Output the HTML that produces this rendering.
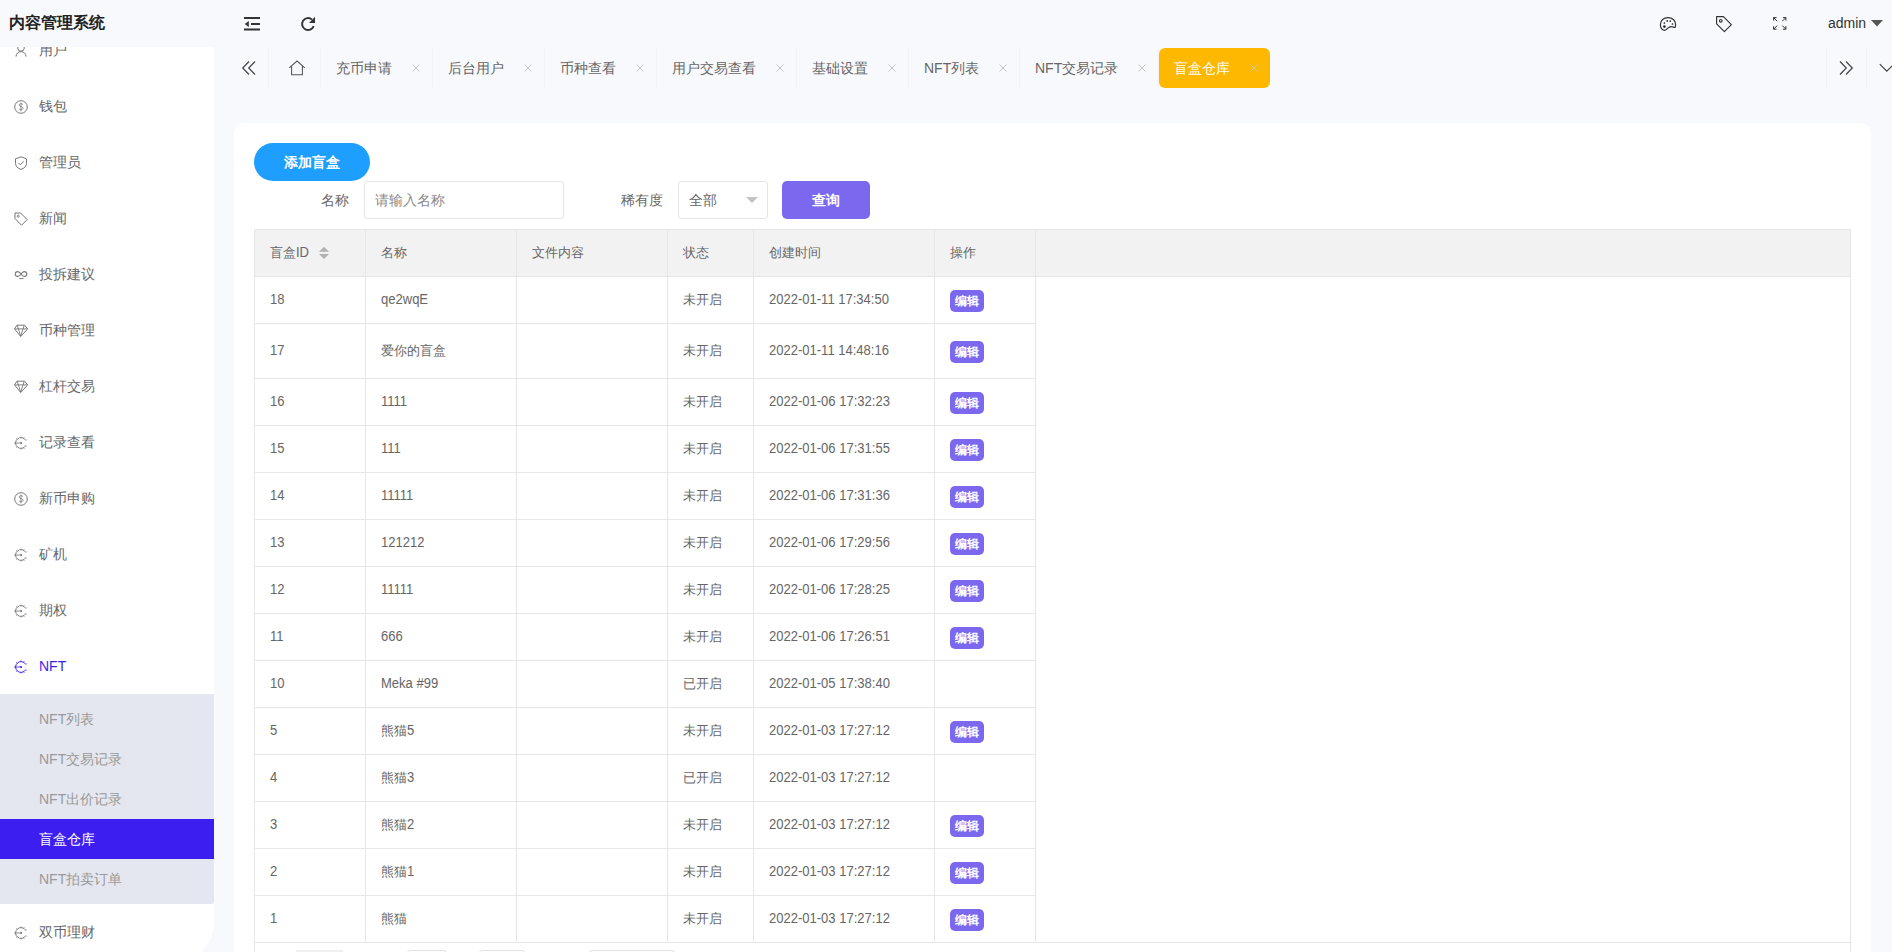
<!DOCTYPE html>
<html><head><meta charset="utf-8">
<style>
*{margin:0;padding:0;box-sizing:border-box}
html,body{width:1892px;height:952px;overflow:hidden}
body{font-family:"Liberation Sans",sans-serif;font-size:14px;color:#666;background:#f8f9fd;position:relative}
.a{position:absolute}
#logo{left:9px;top:11px;font-size:16px;font-weight:bold;color:#222;line-height:24px}
#side{left:0;top:47px;width:214px;height:913px;background:#fff;overflow:hidden;border-bottom-right-radius:36px}
.mi{position:absolute;left:0;width:214px;height:56px;color:#666;font-size:14px}
.mi .ic{position:absolute;left:14px;top:22px;width:14px;height:14px;line-height:0}
.mi .tx{position:absolute;left:39px;top:0;line-height:56px}
#sub{position:absolute;left:0;top:647px;width:214px;height:210px;background:#e4e7ef;border-bottom-right-radius:2px}
.si{position:absolute;left:0;width:214px;height:40px;line-height:40px;color:#999}
.si span{position:absolute;left:39px;top:0}
.si.on{background:#3c1ff0;color:#fff}
#card{left:234px;top:123px;width:1637px;height:900px;background:#fff;border-radius:10px}
.tt{position:absolute;top:48px;height:40px;line-height:40px;color:#666;white-space:nowrap}
.sep{position:absolute;top:48px;width:1px;height:40px;background:#f2f2f3}
.x{position:absolute;top:64px;width:8px;height:8px;line-height:0}
#tbl{left:254px;top:229px;border-collapse:collapse;table-layout:fixed}
#tbl td,#tbl th{border:1px solid #e6e6e6;padding:0 0 0 15px;text-align:left;font-weight:normal;font-size:13px;color:#666;white-space:nowrap;overflow:hidden}
#tbl th{background:#f2f2f2;height:47px}
#tbl td{height:47px}
.n{display:inline-block;font-size:14px;transform:scaleX(.93);transform-origin:0 50%;vertical-align:top;position:relative;top:-1px}
.ed{display:inline-block;background:#7b68ee;color:#fff;font-size:12px;font-weight:bold;border-radius:5px;width:34px;height:22px;line-height:22px;text-align:center;vertical-align:middle;margin-top:2px}
</style></head><body>
<div id="logo" class="a">内容管理系统</div>

<svg class="a" style="left:0;top:0" width="340" height="40" viewBox="0 0 340 40"><path d="M244 18h16M251 24h9M244 29.5h16" fill="none" stroke="#333" stroke-width="2"/><path d="M244.8 24l4-3v6z" fill="#333"/><path d="M313.7 26.2A6 6 0 1 1 311.9 19.4" fill="none" stroke="#333" stroke-width="1.9"/><path d="M315 16.8v6.2h-6z" fill="#333"/></svg>

<div id="side" class="a">
<div class="mi" style="top:-25px;color:#666"><div class="ic"><svg width="14" height="14" viewBox="0 0 14 14"><circle cx="7" cy="3.9" r="3.3" fill="none" stroke="#777" stroke-width="1"/><path d="M2 12.6C2 9.7 4.2 7.6 7 7.6s5 2.1 5 5" fill="none" stroke="#777" stroke-width="1"/></svg></div><div class="tx">用户</div></div>
<div class="mi" style="top:31px;color:#666"><div class="ic"><svg width="14" height="14" viewBox="0 0 14 14"><circle cx="7" cy="7" r="6.3" fill="none" stroke="#777" stroke-width="1"/><path d="M9 4.6c-.4-.6-1.1-.9-2-.9-1.1 0-1.9.6-1.9 1.4 0 1.9 4 1 4 3 0 .9-.9 1.5-2.1 1.5-.9 0-1.7-.4-2.1-1M7 2.6v8.8" fill="none" stroke="#777" stroke-width=".8"/></svg></div><div class="tx">钱包</div></div>
<div class="mi" style="top:87px;color:#666"><div class="ic"><svg width="14" height="14" viewBox="0 0 14 14"><path d="M7 .8L1.5 2.8v4.6c0 3 2.6 5.1 5.5 6 2.9-.9 5.5-3 5.5-6V2.8z" fill="none" stroke="#777" stroke-width="1"/><path d="M4.5 7l1.8 1.8L9.7 5.4" fill="none" stroke="#777" stroke-width="1"/></svg></div><div class="tx">管理员</div></div>
<div class="mi" style="top:143px;color:#666"><div class="ic"><svg width="14" height="14" viewBox="0 0 14 14"><path d="M1 1h5.6l6.6 6.6-5.6 5.6L1 6.6z" fill="none" stroke="#777" stroke-width="1" stroke-linejoin="round"/><circle cx="4.2" cy="4.2" r="1.1" fill="none" stroke="#777" stroke-width=".9"/></svg></div><div class="tx">新闻</div></div>
<div class="mi" style="top:199px;color:#666"><div class="ic"><svg width="14" height="14" viewBox="0 0 14 14"><path d="M7 6C6 4.6 5.1 3.6 3.9 3.6 2.4 3.6 1.2 4.6 1.2 6S2.4 8.4 3.9 8.4C5.1 8.4 6 7.4 7 6S8.9 3.6 10.1 3.6C11.6 3.6 12.8 4.6 12.8 6S11.6 8.4 10.1 8.4C8.9 8.4 8 7.4 7 6Z" fill="none" stroke="#777" stroke-width="1.1"/><path d="M5.2 10.6h4.3" stroke="#777" stroke-width="1"/></svg></div><div class="tx">投拆建议</div></div>
<div class="mi" style="top:255px;color:#666"><div class="ic"><svg width="14" height="14" viewBox="0 0 14 14"><path d="M2.9 1.2h7.8l2.9 3.7-6.9 7.6L.5 4.9z" fill="none" stroke="#777" stroke-width="1" stroke-linejoin="round"/><path d="M1 4.9h12M3.3 1.6l3.4 10.5 3.4-10.5" fill="none" stroke="#777" stroke-width=".9"/></svg></div><div class="tx">币种管理</div></div>
<div class="mi" style="top:311px;color:#666"><div class="ic"><svg width="14" height="14" viewBox="0 0 14 14"><path d="M2.9 1.2h7.8l2.9 3.7-6.9 7.6L.5 4.9z" fill="none" stroke="#777" stroke-width="1" stroke-linejoin="round"/><path d="M1 4.9h12M3.3 1.6l3.4 10.5 3.4-10.5" fill="none" stroke="#777" stroke-width=".9"/></svg></div><div class="tx">杠杆交易</div></div>
<div class="mi" style="top:367px;color:#666"><div class="ic"><svg width="14" height="14" viewBox="0 0 14 14"><path d="M11.68 4.30A5.4 5.4 0 1 0 11.68 9.70" fill="none" stroke="#777" stroke-width=".95"/><path d="M11.68 4.30L12.63 3.75M9.70 2.32L10.25 1.37M7.00 1.60L7.00 0.50M3.18 3.18L2.40 2.40M1.60 7.00L0.50 7.00M3.18 10.82L2.40 11.60M7.00 12.40L7.00 13.50M9.70 11.68L10.25 12.63M11.68 9.70L12.63 10.25" fill="none" stroke="#777" stroke-width=".8"/><path d="M.4 7H7" stroke="#777" stroke-width=".8"/><circle cx="7.1" cy="7" r="1.05" fill="#777"/></svg></div><div class="tx">记录查看</div></div>
<div class="mi" style="top:423px;color:#666"><div class="ic"><svg width="14" height="14" viewBox="0 0 14 14"><circle cx="7" cy="7" r="6.3" fill="none" stroke="#777" stroke-width="1"/><path d="M9 4.6c-.4-.6-1.1-.9-2-.9-1.1 0-1.9.6-1.9 1.4 0 1.9 4 1 4 3 0 .9-.9 1.5-2.1 1.5-.9 0-1.7-.4-2.1-1M7 2.6v8.8" fill="none" stroke="#777" stroke-width=".8"/></svg></div><div class="tx">新币申购</div></div>
<div class="mi" style="top:479px;color:#666"><div class="ic"><svg width="14" height="14" viewBox="0 0 14 14"><path d="M11.68 4.30A5.4 5.4 0 1 0 11.68 9.70" fill="none" stroke="#777" stroke-width=".95"/><path d="M11.68 4.30L12.63 3.75M9.70 2.32L10.25 1.37M7.00 1.60L7.00 0.50M3.18 3.18L2.40 2.40M1.60 7.00L0.50 7.00M3.18 10.82L2.40 11.60M7.00 12.40L7.00 13.50M9.70 11.68L10.25 12.63M11.68 9.70L12.63 10.25" fill="none" stroke="#777" stroke-width=".8"/><path d="M.4 7H7" stroke="#777" stroke-width=".8"/><circle cx="7.1" cy="7" r="1.05" fill="#777"/></svg></div><div class="tx">矿机</div></div>
<div class="mi" style="top:535px;color:#666"><div class="ic"><svg width="14" height="14" viewBox="0 0 14 14"><path d="M11.68 4.30A5.4 5.4 0 1 0 11.68 9.70" fill="none" stroke="#777" stroke-width=".95"/><path d="M11.68 4.30L12.63 3.75M9.70 2.32L10.25 1.37M7.00 1.60L7.00 0.50M3.18 3.18L2.40 2.40M1.60 7.00L0.50 7.00M3.18 10.82L2.40 11.60M7.00 12.40L7.00 13.50M9.70 11.68L10.25 12.63M11.68 9.70L12.63 10.25" fill="none" stroke="#777" stroke-width=".8"/><path d="M.4 7H7" stroke="#777" stroke-width=".8"/><circle cx="7.1" cy="7" r="1.05" fill="#777"/></svg></div><div class="tx">期权</div></div>
<div class="mi" style="top:591px;color:#3c1ff0"><div class="ic"><svg width="14" height="14" viewBox="0 0 14 14"><path d="M11.68 4.30A5.4 5.4 0 1 0 11.68 9.70" fill="none" stroke="#3c1ff0" stroke-width=".95"/><path d="M11.68 4.30L12.63 3.75M9.70 2.32L10.25 1.37M7.00 1.60L7.00 0.50M3.18 3.18L2.40 2.40M1.60 7.00L0.50 7.00M3.18 10.82L2.40 11.60M7.00 12.40L7.00 13.50M9.70 11.68L10.25 12.63M11.68 9.70L12.63 10.25" fill="none" stroke="#3c1ff0" stroke-width=".8"/><path d="M.4 7H7" stroke="#3c1ff0" stroke-width=".8"/><circle cx="7.1" cy="7" r="1.05" fill="#3c1ff0"/></svg></div><div class="tx">NFT</div></div>
<div id="sub">
<div class="si" style="top:5px"><span>NFT列表</span></div>
<div class="si" style="top:45px"><span>NFT交易记录</span></div>
<div class="si" style="top:85px"><span>NFT出价记录</span></div>
<div class="si on" style="top:125px"><span>盲盒仓库</span></div>
<div class="si" style="top:165px"><span>NFT拍卖订单</span></div>
</div>
<div class="mi" style="top:857px"><div class="ic"><svg width="14" height="14" viewBox="0 0 14 14"><path d="M11.68 4.30A5.4 5.4 0 1 0 11.68 9.70" fill="none" stroke="#777" stroke-width=".95"/><path d="M11.68 4.30L12.63 3.75M9.70 2.32L10.25 1.37M7.00 1.60L7.00 0.50M3.18 3.18L2.40 2.40M1.60 7.00L0.50 7.00M3.18 10.82L2.40 11.60M7.00 12.40L7.00 13.50M9.70 11.68L10.25 12.63M11.68 9.70L12.63 10.25" fill="none" stroke="#777" stroke-width=".8"/><path d="M.4 7H7" stroke="#777" stroke-width=".8"/><circle cx="7.1" cy="7" r="1.05" fill="#777"/></svg></div><div class="tx">双币理财</div></div>
</div>
<div id="card" class="a"></div>
<svg class="a" style="left:241px;top:60px" width="16" height="16" viewBox="0 0 16 16"><path d="M8 1.5L1.7 8 8 14.5M14 1.5L7.7 8 14 14.5" fill="none" stroke="#444" stroke-width="1.2"/></svg>
<div class="sep" style="left:268px"></div>
<svg class="a" style="left:288px;top:60px" width="18" height="16" viewBox="0 0 18 16"><path d="M1.2 7.8L9 1 16.8 7.8M3.6 6.2v8.6h10.8V6.2" fill="none" stroke="#555" stroke-width="1.05"/></svg>
<div class="sep" style="left:320px"></div>
<div class="tt" style="left:336px">充币申请</div>
<svg class="x" style="left:412px" width="8" height="8" viewBox="0 0 8 8"><path d="M.5.5l7 7M7.5.5l-7 7" stroke="#c4c4c4" stroke-width="1"/></svg>
<div class="sep" style="left:432px"></div>
<div class="tt" style="left:448px">后台用户</div>
<svg class="x" style="left:524px" width="8" height="8" viewBox="0 0 8 8"><path d="M.5.5l7 7M7.5.5l-7 7" stroke="#c4c4c4" stroke-width="1"/></svg>
<div class="sep" style="left:544px"></div>
<div class="tt" style="left:560px">币种查看</div>
<svg class="x" style="left:636px" width="8" height="8" viewBox="0 0 8 8"><path d="M.5.5l7 7M7.5.5l-7 7" stroke="#c4c4c4" stroke-width="1"/></svg>
<div class="sep" style="left:656px"></div>
<div class="tt" style="left:672px">用户交易查看</div>
<svg class="x" style="left:776px" width="8" height="8" viewBox="0 0 8 8"><path d="M.5.5l7 7M7.5.5l-7 7" stroke="#c4c4c4" stroke-width="1"/></svg>
<div class="sep" style="left:796px"></div>
<div class="tt" style="left:812px">基础设置</div>
<svg class="x" style="left:888px" width="8" height="8" viewBox="0 0 8 8"><path d="M.5.5l7 7M7.5.5l-7 7" stroke="#c4c4c4" stroke-width="1"/></svg>
<div class="sep" style="left:908px"></div>
<div class="tt" style="left:924px">NFT列表</div>
<svg class="x" style="left:999px" width="8" height="8" viewBox="0 0 8 8"><path d="M.5.5l7 7M7.5.5l-7 7" stroke="#c4c4c4" stroke-width="1"/></svg>
<div class="sep" style="left:1019px"></div>
<div class="tt" style="left:1035px">NFT交易记录</div>
<svg class="x" style="left:1138px" width="8" height="8" viewBox="0 0 8 8"><path d="M.5.5l7 7M7.5.5l-7 7" stroke="#c4c4c4" stroke-width="1"/></svg>
<div class="sep" style="left:1158px"></div>
<div class="a" style="left:1159px;top:48px;width:111px;height:40px;background:#ffb800;border-radius:6px"></div>
<div class="tt" style="left:1174px;color:#fff">盲盒仓库</div>
<svg class="x" style="left:1250px" width="8" height="8" viewBox="0 0 8 8"><path d="M.5.5l7 7M7.5.5l-7 7" stroke="#d9c9a0" stroke-width="1"/></svg>
<div class="sep" style="left:1826px"></div><div class="sep" style="left:1866px"></div>
<svg class="a" style="left:1838px;top:60px" width="16" height="16" viewBox="0 0 16 16"><path d="M2 1.5l6.3 6.5L2 14.5M8 1.5l6.3 6.5L8 14.5" fill="none" stroke="#444" stroke-width="1.2"/></svg>
<svg class="a" style="left:1879px;top:63px" width="16" height="10" viewBox="0 0 16 10"><path d="M.8 1.2l7 7 7-7" fill="none" stroke="#444" stroke-width="1.2"/></svg>
<svg class="a" style="left:1600px;top:0" width="200" height="40" viewBox="1600 0 200 40"><path d="M1664 30.3C1661.5 29.5 1660.4 27 1660.4 24.5 1660.4 20.3 1663.7 17.6 1668 17.6S1675.6 20.5 1675.6 24.2C1675.6 25.5 1675.4 26.6 1675 27.4 1673.5 27.2 1672 26.3 1670 26.8 1667.5 27.4 1666.5 30.6 1664 30.3Z" fill="none" stroke="#333" stroke-width="1.2"/><circle cx="1664.4" cy="26.6" r="1.3" fill="#222"/><circle cx="1664.4" cy="23" r=".85" fill="#222"/><circle cx="1667.2" cy="20.9" r=".85" fill="#222"/><circle cx="1670.3" cy="21.1" r=".85" fill="#222"/><circle cx="1672.5" cy="24" r=".85" fill="#222"/>
<path d="M1716.6 16.6h6.8l8 8-7 7-7.8-7.8z" fill="none" stroke="#333" stroke-width="1.15" stroke-linejoin="round"/><circle cx="1720.8" cy="20.8" r="1.35" fill="none" stroke="#333" stroke-width="1.1"/>
<path d="M1773.6 17.6l3.6 3.6M1773.6 17.6h3M1773.6 17.6v3M1785.9 17.6l-3.6 3.6M1785.9 17.6h-3M1785.9 17.6v3M1773.6 29.2l3.6-3.6M1773.6 29.2h3M1773.6 29.2v-3M1785.9 29.2l-3.6-3.6M1785.9 29.2h-3M1785.9 29.2v-3" fill="none" stroke="#333" stroke-width="1"/></svg>
<div class="a" style="left:1828px;top:13px;line-height:20px;font-size:14px;color:#333">admin</div>
<svg class="a" style="left:1871px;top:20px" width="12" height="7" viewBox="0 0 12 7"><path d="M0 0h12L6 6.5z" fill="#555"/></svg>

<div class="a" style="left:254px;top:143px;width:116px;height:38px;border-radius:19px;background:#1e9fff;color:#fff;font-weight:bold;line-height:38px;text-align:center">添加盲盒</div>
<div class="a" style="left:321px;top:181px;line-height:38px;color:#666">名称</div>
<div class="a" style="left:364px;top:181px;width:200px;height:38px;border:1px solid #e6e6e6;border-radius:3px;line-height:36px;padding-left:10px;color:#8a8a8a">请输入名称</div>
<div class="a" style="left:621px;top:181px;line-height:38px;color:#666">稀有度</div>
<div class="a" style="left:678px;top:181px;width:90px;height:38px;border:1px solid #e6e6e6;border-radius:3px;line-height:36px;padding-left:10px;color:#666">全部</div>
<svg class="a" style="left:746px;top:197px" width="12" height="6" viewBox="0 0 12 6"><path d="M0 0h12L6 6z" fill="#c2c2c2"/></svg>
<div class="a" style="left:782px;top:181px;width:88px;height:38px;border-radius:5px;background:#7b68ee;color:#fff;font-weight:bold;line-height:38px;text-align:center">查询</div>
<div class="a" style="left:254px;top:229px;width:1597px;height:800px;border:1px solid #e6e6e6"></div>
<div class="a" style="left:254px;top:229px;width:1597px;height:48px;background:#f2f2f2;border:1px solid #e6e6e6"></div>
<div class="a" style="left:254px;top:942px;width:1597px;height:1px;background:#e6e6e6"></div>
<table id="tbl" class="a"><colgroup><col style="width:111px"><col style="width:151px"><col style="width:151px"><col style="width:86px"><col style="width:181px"><col style="width:101px"></colgroup>
<tr><th>盲盒<span class="n" style="top:0">ID</span></th><th>名称</th><th>文件内容</th><th>状态</th><th>创建时间</th><th>操作</th></tr>
<tr style="height:47px"><td style="height:47px"><span class="n">18</span></td><td><span class="n">qe2wqE</span></td><td></td><td>未开启</td><td><span class="n">2022-01-11 17:34:50</span></td><td><span class="ed">编辑</span></td></tr>
<tr style="height:55px"><td style="height:55px"><span class="n">17</span></td><td>爱你的盲盒</td><td></td><td>未开启</td><td><span class="n">2022-01-11 14:48:16</span></td><td><span class="ed">编辑</span></td></tr>
<tr style="height:47px"><td style="height:47px"><span class="n">16</span></td><td><span class="n">1111</span></td><td></td><td>未开启</td><td><span class="n">2022-01-06 17:32:23</span></td><td><span class="ed">编辑</span></td></tr>
<tr style="height:47px"><td style="height:47px"><span class="n">15</span></td><td><span class="n">111</span></td><td></td><td>未开启</td><td><span class="n">2022-01-06 17:31:55</span></td><td><span class="ed">编辑</span></td></tr>
<tr style="height:47px"><td style="height:47px"><span class="n">14</span></td><td><span class="n">11111</span></td><td></td><td>未开启</td><td><span class="n">2022-01-06 17:31:36</span></td><td><span class="ed">编辑</span></td></tr>
<tr style="height:47px"><td style="height:47px"><span class="n">13</span></td><td><span class="n">121212</span></td><td></td><td>未开启</td><td><span class="n">2022-01-06 17:29:56</span></td><td><span class="ed">编辑</span></td></tr>
<tr style="height:47px"><td style="height:47px"><span class="n">12</span></td><td><span class="n">11111</span></td><td></td><td>未开启</td><td><span class="n">2022-01-06 17:28:25</span></td><td><span class="ed">编辑</span></td></tr>
<tr style="height:47px"><td style="height:47px"><span class="n">11</span></td><td><span class="n">666</span></td><td></td><td>未开启</td><td><span class="n">2022-01-06 17:26:51</span></td><td><span class="ed">编辑</span></td></tr>
<tr style="height:47px"><td style="height:47px"><span class="n">10</span></td><td><span class="n">Meka #99</span></td><td></td><td>已开启</td><td><span class="n">2022-01-05 17:38:40</span></td><td></td></tr>
<tr style="height:47px"><td style="height:47px"><span class="n">5</span></td><td>熊猫<span class="n" style="top:0">5</span></td><td></td><td>未开启</td><td><span class="n">2022-01-03 17:27:12</span></td><td><span class="ed">编辑</span></td></tr>
<tr style="height:47px"><td style="height:47px"><span class="n">4</span></td><td>熊猫<span class="n" style="top:0">3</span></td><td></td><td>已开启</td><td><span class="n">2022-01-03 17:27:12</span></td><td></td></tr>
<tr style="height:47px"><td style="height:47px"><span class="n">3</span></td><td>熊猫<span class="n" style="top:0">2</span></td><td></td><td>未开启</td><td><span class="n">2022-01-03 17:27:12</span></td><td><span class="ed">编辑</span></td></tr>
<tr style="height:47px"><td style="height:47px"><span class="n">2</span></td><td>熊猫<span class="n" style="top:0">1</span></td><td></td><td>未开启</td><td><span class="n">2022-01-03 17:27:12</span></td><td><span class="ed">编辑</span></td></tr>
<tr style="height:47px"><td style="height:47px"><span class="n">1</span></td><td>熊猫</td><td></td><td>未开启</td><td><span class="n">2022-01-03 17:27:12</span></td><td><span class="ed">编辑</span></td></tr>
</table>
<svg class="a" style="left:319px;top:246px" width="10" height="13" viewBox="0 0 10 13"><path d="M0 5.8h10L5 .8z M0 8h10L5 13z" fill="#b2b2b2"/></svg>
<div class="a" style="left:295px;top:950px;width:49px;height:30px;background:#f0f0f0;border-radius:3px"></div>
<div class="a" style="left:407px;top:950px;width:40px;height:30px;border:1px solid #e2e2e2;border-radius:3px"></div>
<div class="a" style="left:479px;top:950px;width:46px;height:30px;border:1px solid #e2e2e2;border-radius:3px"></div>
<div class="a" style="left:589px;top:950px;width:86px;height:30px;border:1px solid #e2e2e2;border-radius:3px"></div>
</body></html>
